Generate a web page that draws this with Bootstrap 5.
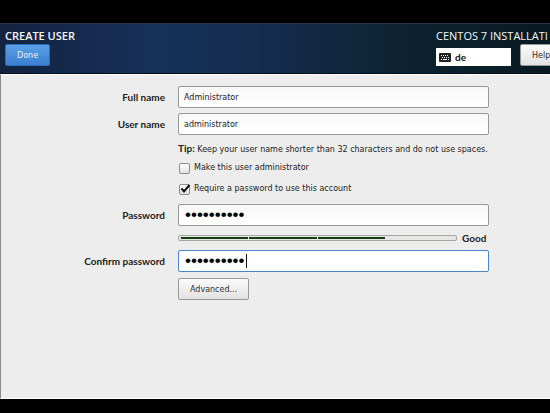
<!DOCTYPE html>
<html lang="en">
<head>
<meta charset="utf-8">
<meta name="viewport" content="width=device-width, initial-scale=1">
<title>Create User</title>
<link href="https://cdn.jsdelivr.net/npm/bootstrap@5.3.0/dist/css/bootstrap.min.css" rel="stylesheet">
<style>
body { background: #000; color: #222; font: 8px/12px "DejaVu Sans", sans-serif; }
.screen { padding: 23px 0 14px; }
.topbar { background: linear-gradient(90deg, #132340 0%, #17305a 28%, #142c4b 50%, #0c2230 75%, #081a22 100%); border-top: 1px solid #26354a; border-bottom: 1px solid #050c18; padding: 5px 0 7px 5px; color: #f4f6f8; }
.heading { font-family: "Open Sans", sans-serif; font-size: 11px; line-height: 14px; font-weight: 400; white-space: nowrap; margin: 0 0 1px; }
.heading-user { font-weight: 600; }
.topbar-right { width: 114px; }
.btn-done, .btn-soft { font-size: 8px; line-height: 12px; padding: 5px 11px 3px; border-radius: 2px; display: block; }
.btn-done { --bs-btn-color: #e4f1ff; --bs-btn-border-color: #2d6db8; background: linear-gradient(#5a9fe8, #3a80d0); }
.btn-soft { --bs-btn-color: #2c3032; --bs-btn-border-color: #999a98; background: linear-gradient(#fbfbfb, #e2e2e2); }
.layout-box { width: 75px; height: 18px; padding: 0 3px; background: #fff; color: #111; }
.btn-help { margin-left: 9px; }
.panel { background: #ededed; border-top: 1px solid #fff; border-left: 1px solid #8c8c8c; border-bottom: 1px solid #fff; padding: 11px 61px 12px 0; }
.form-line { display: grid; grid-template-columns: 164px minmax(0, 1fr); column-gap: 13px; align-items: center; margin-bottom: 5px; }
.line-text { margin: 7px 0 6px; }
.line-choice { margin-bottom: 9px; }
.line-meter { margin: 6px 0; }
.line-action { margin-top: 6px; }
.field-label, .line-text b, .rating, .layout-box { font-family: Lato, sans-serif; font-size: 10px; font-weight: 700; }
.field-label { text-align: right; }
.in-second { grid-column: 2; }
.entry.form-control { height: 22px; min-height: 0; padding: 1px 5px 0; font-size: 8px; line-height: 18px; color: #222; border: 1px solid #979996; border-radius: 2px; background: linear-gradient(#f8f8f8, #fff); box-shadow: none; }
.entry.is-current { border-color: #4a86cf; background: #fff; }
.secret.form-control { padding: 0 6px; font-size: 17px; font-family: "Liberation Sans", sans-serif; color: #000; }
.caret { position: absolute; left: 68px; top: 4px; width: 1px; height: 14px; background: #111; }
.tick { appearance: none; display: block; width: 11px; height: 11px; margin: 0 0 0 1px; border: 1px solid #8d8f8b; border-radius: 2px; background: linear-gradient(#fff, #e2e2e2); }
.tick-mark { position: absolute; left: 1px; top: 0; pointer-events: none; }
.choice-label { margin-left: 4px; }
.strength.progress { height: 6px; padding: 1px 2px; border: 1px solid #a3a8a0; border-radius: 2px; background: #e6e6e6; align-items: center; }
.strength .progress-bar { width: 25%; height: 2px; background: #173f10; border-right: 1px solid #e9efe6; }
.rating { width: 32px; padding-left: 5px; }
</style>
</head>
<body>
<div class="screen d-flex flex-column min-vh-100 overflow-hidden">
  <header class="topbar d-flex justify-content-between overflow-hidden">
    <div>
      <h1 class="heading heading-user">CREATE USER</h1>
      <button type="button" class="btn btn-done">Done</button>
    </div>
    <div class="topbar-right">
      <p class="heading">CENTOS 7 INSTALLATI</p>
      <div class="d-flex align-items-end">
        <div class="layout-box d-flex align-items-center flex-shrink-0 gap-1">
          <svg width="12" height="9" viewBox="0 0 12 9" aria-hidden="true"><rect width="12" height="9" rx="1" fill="#222"/><path d="M2 2.5h8M3 4.5h7" stroke="#fff" stroke-dasharray="1 1"/><path d="M2 6.5h1M4 6.5h4M9 6.5h1" stroke="#fff"/></svg>
          <span>de</span>
        </div>
        <button type="button" class="btn btn-soft btn-help flex-shrink-0">Help</button>
      </div>
    </div>
  </header>
  <main class="panel flex-grow-1">
    <form>
      <div class="form-line">
        <label class="field-label" for="fullname">Full name</label>
        <input class="form-control entry" id="fullname" type="text" value="Administrator">
      </div>
      <div class="form-line">
        <label class="field-label" for="username">User name</label>
        <input class="form-control entry" id="username" type="text" value="administrator">
      </div>
      <div class="form-line line-text">
        <div class="in-second text-nowrap"><b>Tip:</b> Keep your user name shorter than 32 characters and do not use spaces.</div>
      </div>
      <div class="form-line line-choice">
        <div class="in-second d-flex align-items-center">
          <input class="tick" id="admin" type="checkbox">
          <label class="choice-label" for="admin">Make this user administrator</label>
        </div>
      </div>
      <div class="form-line line-choice">
        <div class="in-second d-flex align-items-center position-relative">
          <input class="tick" id="needpass" type="checkbox" checked>
          <svg class="tick-mark" width="12" height="11" viewBox="0 0 12 11" aria-hidden="true"><path d="M2.500 5.500l2.500 3L10.500 2" fill="none" stroke="#111" stroke-width="2"/></svg>
          <label class="choice-label" for="needpass">Require a password to use this account</label>
        </div>
      </div>
      <div class="form-line">
        <label class="field-label" for="pass">Password</label>
        <input class="form-control entry secret" id="pass" type="password" value="adminadmin">
      </div>
      <div class="form-line line-meter">
        <div class="in-second d-flex align-items-center">
          <div class="progress strength flex-grow-1" role="progressbar" aria-label="Password strength" aria-valuenow="75" aria-valuemin="0" aria-valuemax="100">
            <div class="progress-bar"></div>
            <div class="progress-bar"></div>
            <div class="progress-bar"></div>
          </div>
          <b class="rating">Good</b>
        </div>
      </div>
      <div class="form-line">
        <label class="field-label" for="confirm">Confirm password</label>
        <div class="position-relative">
          <input class="form-control entry secret is-current" id="confirm" type="password" value="adminadmin">
          <span class="caret"></span>
        </div>
      </div>
      <div class="form-line line-action">
        <div class="in-second"><button type="button" class="btn btn-soft">Advanced...</button></div>
      </div>
    </form>
  </main>
</div>
</body>
</html>
